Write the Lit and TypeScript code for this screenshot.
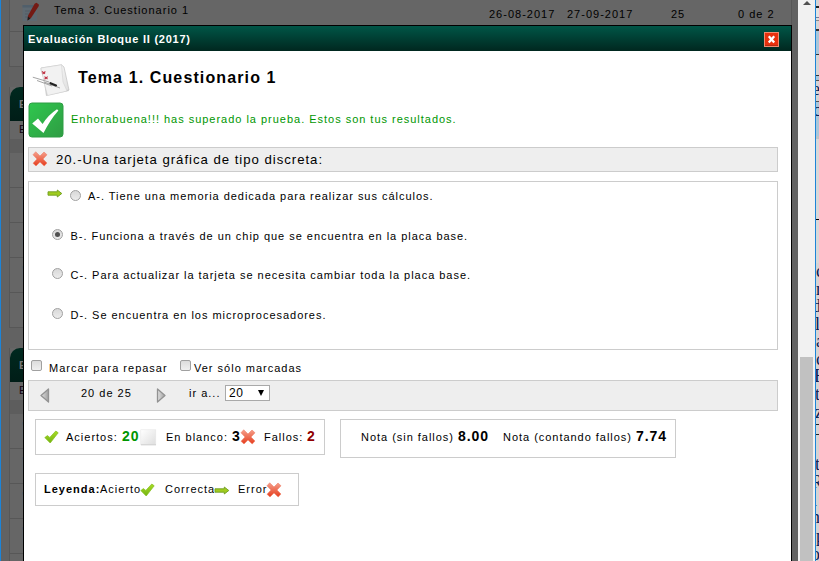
import { LitElement, html, css, svg } from "lit";
import { customElement } from "lit/decorators.js";
import { styleMap } from "lit/directives/style-map.js";

const defs = svg`<defs>
  <linearGradient id="g" x1="0" y1="0" x2="0" y2="1"><stop offset="0" stop-color="#a8dc22"/><stop offset="1" stop-color="#74b314"/></linearGradient>
  <linearGradient id="r" x1="0" y1="0" x2="0" y2="1"><stop offset="0" stop-color="#f5a08c"/><stop offset="1" stop-color="#e63c1c"/></linearGradient>
  <linearGradient id="k" x1="0" y1="0" x2="1" y2="1"><stop offset="0" stop-color="#2fc74e"/><stop offset="1" stop-color="#2f9c43"/></linearGradient>
  <linearGradient id="t" x1="0" y1="0" x2="1" y2="0"><stop offset="0" stop-color="#e0e0e0"/><stop offset="1" stop-color="#a0a0a0"/></linearGradient>
  <linearGradient id="w" x1="0" y1="0" x2="1" y2="1"><stop offset="0" stop-color="#ffffff"/><stop offset="1" stop-color="#dedede"/></linearGradient>
</defs>`;

const tick = html`<svg width="15" height="14" viewBox="0 0 15 14">${defs}
  <path d="M.8 7.6 L3.4 5.6 L5.8 7.4 L11.8 1 L14.2 2.8 L6.2 13 Z" fill="url(#g)" stroke="#84bf1c" stroke-width=".7" stroke-linejoin="round"/></svg>`;
const cross = html`<svg width="16" height="16" viewBox="0 0 16 16">${defs}
  <path d="M3.7 .8 L8 5 L12 1 L15 3.8 L11 8 L15 12 L12.2 15 L8 11 L4 15 L1 12.2 L5 8 L1 3.8 Z" fill="url(#r)" stroke="#ee8068" stroke-width=".6" stroke-linejoin="round"/></svg>`;
const arrow = html`<svg width="16" height="9" viewBox="0 0 16 9">${defs}
  <path d="M1 2.8 H10.3 V1 L14.8 4.5 L10.3 8 V6.2 H1 Z" fill="#a0cc1e" stroke="#6f9d20" stroke-width=".9" stroke-linejoin="round"/></svg>`;
const blank = html`<svg width="17" height="17" viewBox="0 0 17 17">${defs}
  <rect x=".8" y=".8" width="15" height="15" fill="url(#w)" stroke="#e6e6e6" stroke-width=".6"/><path d="M1 15.8 H16" stroke="#cfcfcf"/></svg>`;
const bigTick = html`<svg width="36" height="36" viewBox="0 0 36 36">${defs}
  <rect x="1" y="1" width="34" height="34" rx="3" fill="url(#k)" stroke="#2f9d45"/>
  <path d="M4.2 21.5 L10 16.6 L14.6 22 Q20 13 29 7.2 L30.4 8.4 Q22 18 15.5 31 Z" fill="#fff"/></svg>`;
const papers = html`<svg width="38" height="33" viewBox="0 0 38 33">${defs}
  <path d="M10 4 L28 1 L35 24 L37 27 L14 32 Z" fill="#d0d0d0"/>
  <path d="M9 4 L29.5 .8 L32 3 L37 26 L17 29.5 L9 6 Z" fill="url(#w)" stroke="#b8b8b8" stroke-width=".6"/>
  <path d="M9 4 L29.5 .8 L31 18 L35 27 L15.5 31.5 L12.5 20 Z" fill="#f2f2f2" stroke="#cccccc" stroke-width=".5"/>
  <path d="M.8 13.2 L17 18 M5 16.5 L20 22 M12 18 L28 24" stroke="#9a9a9a" stroke-width=".9" fill="none"/>
  <path d="M10 7.5 L13 9.8 M13.4 7.5 L10.5 10.2 M12.5 12.6 L15.5 15 M15.7 12.6 L12.5 15.2" stroke="#c03446" stroke-width="1.1"/>
  <path d="M18.5 19.2 L24 21.4" stroke="#222" stroke-width="2.2" stroke-linecap="round"/></svg>`;
const notepad = html`<svg width="18" height="20" viewBox="0 0 18 20">
  <path d="M.5 3 H15 V19 H.5 Z" fill="#5e6971"/><path d="M.5 3 H15 V5.5 H.5 Z" fill="#505f6b"/>
  <path d="M3 9 H10 M3 12 H8 M3 15 H7" stroke="#525d66"/>
  <path d="M12.6 1.8 L14.5 .8 L16.8 2.4 L16.8 4 L9 16 L5.5 18.4 L6 13.8 Z" fill="#741a14"/><path d="M6 14.6 L5.5 18.4 L8.4 16.4 Z" fill="#1b1b1b"/></svg>`;
const triangle = (right: boolean) => html`<svg width="11" height="17" viewBox="0 0 11 17">${defs}
  <path d=${right ? "M1.5 2 L9 8.5 L1.5 15 Z" : "M9.5 2 L2 8.5 L9.5 15 Z"} fill="url(#t)" stroke="#929292" stroke-width="1.3" stroke-linejoin="round"/></svg>`;
const closeIcon = html`<svg class="close" width="15" height="15" viewBox="0 0 15 15">
  <rect x=".5" y=".5" width="14" height="14" fill="#e8300d" stroke="#f08a70"/><path d="M1 13.5 H14" stroke="#b92a10"/>
  <path d="M4.8 4.2 L10.2 10.4 M10.2 4.2 L4.8 10.4" stroke="#fff" stroke-width="2.3"/></svg>`;

const options = [
  { text: "A-. Tiene una memoria dedicada para realizar sus cálculos.", correct: true, chosen: false },
  { text: "B-. Funciona a través de un chip que se encuentra en la placa base.", correct: false, chosen: true },
  { text: "C-. Para actualizar la tarjeta se necesita cambiar toda la placa base.", correct: false, chosen: false },
  { text: "D-. Se encuentra en los microprocesadores.", correct: false, chosen: false },
];

// Sliver of the document window behind: [height, background, clipped letter, horizontal shift]
const strip: [number, string, string?, number?][] = [
  [6, "#d4d4d4"], [2, "#222"], [9, "#e2e2e2"], [1, "#777a99"], [2, "#ddd"], [1, "#888"],
  [8, "#d4d4d4"], [2, "#333"], [23, "#a9c6d9"], [1, "#333"], [20, "#d4d4d4"],
  [1, "#333"], [4, "#a9c6d9"], [1, "#555"], [20, "#d4d4d4", "e", -4], [1, "#555"], [34, "#a9c6d9", "c", -3],
  [3, "#bfc3c6"], [80, "#d8d8d8"], [1, "#000"], [43, "#d8d8d8"],
  [18, "#d4d4d4", "c", 0], [17, "#d4d4d4", "n", 0], [18, "#d4d4d4", "d", -4], [17, "#d4d4d4", "l", -1], [18, "#d4d4d4", "a", 0],
  [17, "#d4d4d4", "c", 0], [18, "#d4d4d4", "E", -2], [18, "#d4d4d4", "t", -1], [20, "#d4d4d4", "z", -1], [1, "#222"],
  [9, "#d4d4d4"], [1, "#222"], [21, "#d4d4d4"], [18, "#d4d4d4", "t", -1], [18, "#d4d4d4", "R", -5],
  [17, "#d4d4d4", "i", -4], [19, "#d4d4d4", "n", -5], [18, "#d4d4d4", "p", 0], [18, "#d4d4d4", "o", -5],
];

@customElement("app-root")
export class AppRoot extends LitElement {
  static styles = css`
    :host { display: flex; width: 819px; height: 561px; overflow: hidden; position: relative;
      font: 11px/16px "Liberation Sans", Arial, sans-serif; letter-spacing: 1px; color: #000; background: #fff; }
    * { box-sizing: border-box; }
    svg { display: block; flex: none; }
    .edge { width: 1px; flex: none; background: #1c84d8; }
    .page { width: 797px; flex: none; background: #626262; padding-left: 8px; overflow: hidden; white-space: nowrap; }
    .card { width: 783px; border: 1px solid #575757; border-top: 0; background: #666; }
    .top { height: 67px; margin-bottom: 20px; }
    .result { display: grid; grid-template-columns: 12px 32px 435px 78px 104px 67px 1fr; height: 32px; border-bottom: 1px solid #575757; }
    .result .name { padding-top: 2px; }
    .result .num { padding-top: 6px; }
    .result svg { margin-top: 2px; }
    .block { margin-bottom: 20px; height: 241px; }
    .bar { height: 34px; border-radius: 10px 0 0 0; background: linear-gradient(#00291f, #001d17); color: #777; font-weight: bold; line-height: 34px; padding-left: 9px; }
    .sub { height: 18px; line-height: 16px; padding-left: 9px; color: #100010; }
    .gray { height: 14px; background: #5d5d5d; }
    .line { height: 35px; border-bottom: 1px solid #575757; padding: 5px 0 0 12px; }
    .scroll { width: 17px; flex: none; background: #f1f1f1; display: flex; flex-direction: column; align-items: center; }
    .up { width: 0; height: 0; margin: 1px 0 352px; border: 4px solid transparent; border-top: 0; border-bottom-color: #505050; }
    .thumb { width: 13px; flex: 1; background: #c1c1c1; }
    .strip { width: 3px; flex: none; overflow: hidden; font: 18px/17px "Liberation Serif", serif; color: #101c50; letter-spacing: 0; }
    .seg { overflow: hidden; }
    .modal { position: absolute; left: 23px; top: 25px; width: 769px; height: 540px; border: 1px solid #000; background: #fff; white-space: nowrap; }
    .head { display: flex; height: 25px; justify-content: space-between; background: linear-gradient(#005647, #00271f); color: #fff; font-weight: bold; letter-spacing: .75px; padding: 6px 12px 0 4px; }
    .head span { line-height: 15px; }
    .body { padding: 13px 13px 0 4px; }
    .title { display: flex; height: 38px; padding-left: 4px; font-size: 16px; font-weight: bold; line-height: 28px; letter-spacing: 1.12px; gap: 8px; }
    .pass { display: flex; height: 45px; gap: 7px; color: #009600; line-height: 34px; letter-spacing: .98px; }
    .question { display: flex; align-items: center; height: 25px; border: 1px solid #ccc; background: #eee; font-size: 13.2px; letter-spacing: .97px; padding: 0 0 0 3px; gap: 8px; }
    .question svg { margin-top: -1px; }
    .answers { height: 169px; margin-top: 9px; border: 1px solid #ccc; padding: 4px 0 0 18px; letter-spacing: .97px; }
    .answer { display: flex; height: 39.6px; line-height: 21px; }
    .answer svg { margin: 3px 7px 0 0; }
    .radio { flex: none; width: 11px; height: 11px; border: 1px solid #a0a0a0; border-radius: 50%; background: linear-gradient(#d8d8d8, #ececec); margin: 3px 8px 0 4.5px; padding: 2px; }
    svg + .radio { margin: 4px 7px 0 0; }
    .dot { width: 5px; height: 5px; border-radius: 50%; background: #505050; }
    .marks { display: grid; grid-template-columns: 18px 131px 14px 1fr; height: 30px; padding: 10px 0 0 3px; }
    .box { width: 11px; height: 11px; border: 1px solid #a0a0a0; border-radius: 2px; background: linear-gradient(#dcdcdc, #f0f0f0); }
    .nav { display: grid; grid-template-columns: 42px 75px 33px 36px 45px; height: 31px; border: 1px solid #ccc; background: #eee; padding: 4px 0 0 10px; }
    .nav svg { margin-top: 2px; }
    .select { display: flex; justify-content: space-between; height: 16px; border: 1px solid #a9a9a9; background: #fff; padding: 0 5px 0 3px; font-size: 12px; letter-spacing: .6px; line-height: 15px; }
    .caret { width: 0; height: 0; margin-top: 4px; border: 3px solid transparent; border-top: 6px solid #000; border-bottom: 0; }
    .stats { display: flex; gap: 15px; padding: 8px 0 0 7px; align-items: flex-start; }
    .panel { display: grid; border: 1px solid #ccc; }
    .counts { width: 290px; height: 36px; grid-template-columns: 22px 56px 18px 26px 66px 8px 24px 43px 1fr; padding: 9px 0 0 8px; }
    .counts svg { margin-top: 0; }
    .counts svg:first-child { margin-top: 1px; }
    .grades { width: 336px; height: 39px; grid-template-columns: 97px 45px 133px 1fr; padding: 9px 0 0 20px; letter-spacing: .97px; }
    .legend { width: 264px; height: 33px; margin: 15px 0 0 7px; grid-template-columns: 56px 40px 25px 49px 24px 28px 1fr; padding: 7px 0 0 8px; }
    .legend svg { margin-top: 2px; }
    .legend span + svg:nth-child(5) { margin-top: 5px; }
    .legend svg:last-child { margin-top: 1px; }
    .counts b, .grades b { font-size: 14px; line-height: 14px; }
    .ok { color: #009600; }
    .bad { color: #900000; }
  `;

  private block(n: number) {
    return html`<div class="card block"><div class="bar">Evaluación</div><div class="sub">Evaluación</div><div class="gray"></div>
      ${Array.from({ length: n }, () => html`<div class="line">${notepad}</div>`)}</div>`;
  }

  render() {
    return html`
      <div class="edge"></div>
      <div class="page">
        <div class="card top">
          <div class="result"><span></span>${notepad}<span class="name">Tema 3. Cuestionario 1</span>
            <span class="num">26-08-2017</span><span class="num">27-09-2017</span><span class="num">25</span><span class="num">0 de 2</span></div>
          <div class="line">${notepad}</div>
        </div>
        ${this.block(5)}${this.block(5)}
      </div>
      <div class="scroll"><div class="up"></div><div class="thumb"></div></div>
      <div class="edge"></div>
      <div class="strip">${strip.map(([h, background, ch = "", shift = 0]) => html`<div class="seg" style=${styleMap({ height: `${h}px`, background, textIndent: `${shift}px` })}>${ch}</div>`)}</div>

      <div class="modal">
        <div class="head"><span>Evaluación Bloque II (2017)</span>${closeIcon}</div>
        <div class="body">
          <div class="title">${papers}<span>Tema 1. Cuestionario 1</span></div>
          <div class="pass">${bigTick}<span>Enhorabuena!!! has superado la prueba. Estos son tus resultados.</span></div>
          <div class="question">${cross}<span>20.-Una tarjeta gráfica de tipo discreta:</span></div>
          <div class="answers">
            ${options.map((o) => html`<div class="answer">${o.correct ? arrow : ""}<div class="radio">${o.chosen ? html`<div class="dot"></div>` : ""}</div><span>${o.text}</span></div>`)}
          </div>
          <div class="marks"><div class="box"></div><span>Marcar para repasar</span><div class="box"></div><span>Ver sólo marcadas</span></div>
          <div class="nav">${triangle(false)}<span>20 de 25</span>${triangle(true)}<span>ir a...</span>
            <div class="select"><span>20</span><div class="caret"></div></div></div>
          <div class="stats">
            <div class="panel counts">${tick}<span>Aciertos:</span><b class="ok">20</b>${blank}<span>En blanco:</span><b>3</b>${cross}<span>Fallos:</span><b class="bad">2</b></div>
            <div class="panel grades"><span>Nota (sin fallos)</span><b>8.00</b><span>Nota (contando fallos)</span><b>7.74</b></div>
          </div>
          <div class="panel legend"><b>Leyenda:</b><span>Acierto</span>${tick}<span>Correcta</span>${arrow}<span>Error</span>${cross}</div>
        </div>
      </div>`;
  }
}
